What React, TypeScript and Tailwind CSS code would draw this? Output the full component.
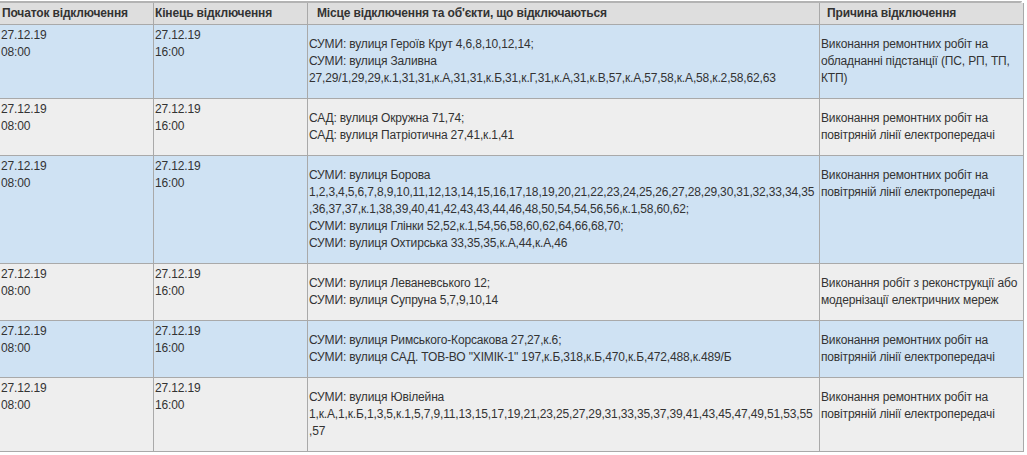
const rows = [
  {
    place: [
      "СУМИ: вулиця Героїв Крут 4,6,8,10,12,14;",
      "СУМИ: вулиця Заливна",
      "27,29/1,29,29,к.1,31,31,к.А,31,31,к.Б,31,к.Г,31,к.А,31,к.В,57,к.А,57,58,к.А,58,к.2,58,62,63",
    ],
    reason: ["Виконання ремонтних робіт на", "обладнанні підстанції (ПС, РП, ТП,", "КТП)"],
  },
  {
    place: ["САД: вулиця Окружна 71,74;", "САД: вулиця Патріотична 27,41,к.1,41"],
    reason: ["Виконання ремонтних робіт на", "повітряній лінії електропередачі"],
  },
  {
    place: [
      "СУМИ: вулиця Борова",
      "1,2,3,4,5,6,7,8,9,10,11,12,13,14,15,16,17,18,19,20,21,22,23,24,25,26,27,28,29,30,31,32,33,34,35",
      ",36,37,37,к.1,38,39,40,41,42,43,43,44,46,48,50,54,54,56,56,к.1,58,60,62;",
      "СУМИ: вулиця Глінки 52,52,к.1,54,56,58,60,62,64,66,68,70;",
      "СУМИ: вулиця Охтирська 33,35,35,к.А,44,к.А,46",
    ],
    reason: ["Виконання ремонтних робіт на", "повітряній лінії електропередачі"],
  },
  {
    place: ["СУМИ: вулиця Леваневського 12;", "СУМИ: вулиця Супруна 5,7,9,10,14"],
    reason: ["Виконання робіт з реконструкції або", "модернізації електричних мереж"],
  },
  {
    place: [
      "СУМИ: вулиця Римського-Корсакова 27,27,к.6;",
      "СУМИ: вулиця САД. ТОВ-ВО \"ХІМІК-1\" 197,к.Б,318,к.Б,470,к.Б,472,488,к.489/Б",
    ],
    reason: ["Виконання ремонтних робіт на", "повітряній лінії електропередачі"],
  },
  {
    place: [
      "СУМИ: вулиця Ювілейна",
      "1,к.А,1,к.Б,1,3,5,к.1,5,7,9,11,13,15,17,19,21,23,25,27,29,31,33,35,37,39,41,43,45,47,49,51,53,55",
      ",57",
    ],
    reason: ["Виконання ремонтних робіт на", "повітряній лінії електропередачі"],
  },
];

function Lines({ lines }: { lines: string[] }) {
  return (
    <>
      {lines.map((l, i) => (
        <div key={i} className="whitespace-nowrap">
          {l}
        </div>
      ))}
    </>
  );
}

export default function App() {
  return (
    <div
      className="h-[455px] w-[1027px] overflow-hidden bg-white text-[12px] leading-[17px] tracking-[-0.15px] text-[#333333]"
      style={{ fontFamily: '"Liberation Sans", Arial, sans-serif' }}
    >
      <div className="mt-px h-[2px] w-[1022px] rounded-br-[3px] bg-[#b3b3b3]" />
      <div className="grid w-[1024px] grid-cols-[154px_154px_512px_204px]">
        <div className="border-r border-b border-[#a9a9a9] bg-[#dedede] px-[2px] py-[2px] font-bold">
          Початок відключення
        </div>
        <div className="border-r border-b border-[#a9a9a9] bg-[#dedede] px-[1px] py-[2px] font-bold">
          Кінець відключення
        </div>
        <div className="border-r border-b border-[#a9a9a9] bg-[#dedede] pl-[9px] py-[2px] font-bold">
          Місце відключення та об'єкти, що відключаються
        </div>
        <div className="border-r border-b border-[#a9a9a9] bg-[#dedede] pl-[7px] py-[2px] font-bold">
          Причина відключення
        </div>

        {rows.map((r, i) => {
          const bg = i % 2 === 0 ? "bg-[#cfe2f3]" : "bg-[#eeeeee]";
          return [
            <div key={`a${i}`} className={`border-r border-b border-[#a9a9a9] ${bg} px-[1px] pt-[2px]`}>
              <div>27.12.19</div>
              <div>08:00</div>
            </div>,
            <div key={`b${i}`} className={`border-r border-b border-[#a9a9a9] ${bg} px-[1px] pt-[2px]`}>
              <div>27.12.19</div>
              <div>16:00</div>
            </div>,
            <div key={`c${i}`} className={`border-r border-b border-[#a9a9a9] ${bg} pl-[1px] pt-[11px] pb-[11px]`}>
              <Lines lines={r.place} />
            </div>,
            <div key={`d${i}`} className={`border-r border-b border-[#a9a9a9] ${bg} pl-[1px] pt-[11px] pb-[11px]`}>
              <Lines lines={r.reason} />
            </div>,
          ];
        })}
      </div>
    </div>
  );
}
